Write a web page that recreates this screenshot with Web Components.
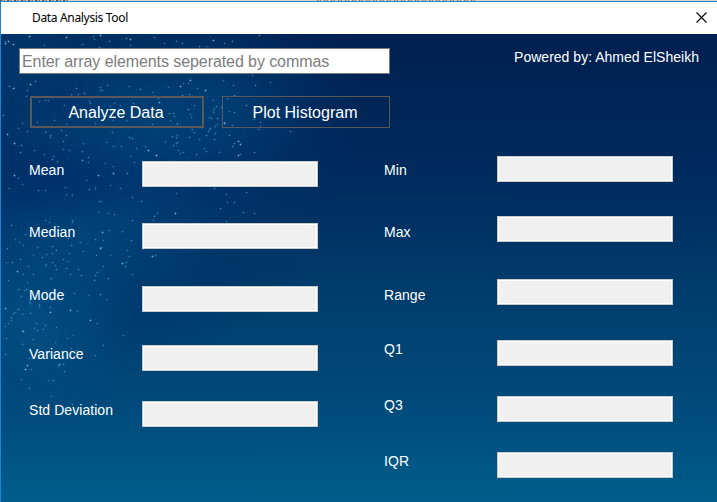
<!DOCTYPE html>
<html lang="en">
<head>
<meta charset="utf-8">
<title>Data Analysis Tool</title>
<style>
html,body{margin:0;width:717px;height:502px;overflow:hidden;font-family:"Liberation Sans",Arial,sans-serif}
</style>
</head>
<body>
<tool-window></tool-window>
<script>
const define = (name, html, setup) => customElements.define(name, class extends HTMLElement {
  connectedCallback() {
    if (this.shadowRoot) return;
    this.attachShadow({ mode: "open" }).innerHTML = html;
    if (setup) setup(this, this.shadowRoot);
  }
});

define("title-bar", `
<style>
:host{display:flex;height:32px;box-sizing:border-box;background:#fff;color:#000;padding:0 10px 0 31px;justify-content:space-between;align-items:center}
span{font:12px/16px "Noto Sans","Open Sans",sans-serif;letter-spacing:-.33px;white-space:nowrap}
svg{display:block;margin-top:-1px}
</style>
<span><slot></slot></span>
<svg width="11" height="11" viewBox="0 0 11 11"><path d="M.5.5l10 10M10.5.5l-10 10" stroke="#000" stroke-width="1.1" fill="none"/></svg>`);

define("starry-sky", `
<style>:host{display:block}svg{display:block}</style>
<svg width="716" height="468" viewBox="1 34 716 468">
<defs>
<linearGradient id="base" x1="0" y1="0" x2="0" y2="1">
<stop offset="0" stop-color="#002050"/><stop offset=".3" stop-color="#002b5e"/><stop offset=".6" stop-color="#00406f"/><stop offset=".8" stop-color="#004b7b"/><stop offset="1" stop-color="#005d8b"/></linearGradient>
<radialGradient id="glow"><stop offset="0" stop-color="#00568a" stop-opacity=".75"/><stop offset=".5" stop-color="#004c86" stop-opacity=".45"/><stop offset="1" stop-color="#004484" stop-opacity="0"/></radialGradient>
<radialGradient id="dark"><stop offset="0" stop-color="#002c68" stop-opacity=".8"/><stop offset="1" stop-color="#002c68" stop-opacity="0"/></radialGradient>
</defs>
<rect x="1" y="34" width="716" height="468" fill="url(#base)"/>
<g fill="url(#glow)">
<ellipse cx="100" cy="100" rx="270" ry="170" opacity=".6"/>
<ellipse cx="20" cy="55" rx="70" ry="60" opacity=".3"/>
<ellipse cx="150" cy="125" rx="150" ry="70" opacity=".35"/>
<ellipse cx="225" cy="100" rx="110" ry="75" opacity=".35"/>
<ellipse cx="90" cy="235" rx="180" ry="100" opacity=".55" transform="rotate(-18 90 235)"/>
<ellipse cx="30" cy="320" rx="120" ry="120" opacity=".75"/>
<ellipse cx="45" cy="345" rx="60" ry="55" opacity=".3"/>
</g>
<g fill="url(#dark)">
<ellipse cx="70" cy="100" rx="60" ry="32" opacity=".6"/>
<ellipse cx="60" cy="178" rx="100" ry="45" opacity=".8"/>
<ellipse cx="190" cy="190" rx="110" ry="38" opacity=".4"/>
<ellipse cx="205" cy="285" rx="130" ry="55" opacity=".4" transform="rotate(-32 205 285)"/>
<ellipse cx="135" cy="315" rx="50" ry="60" opacity=".25"/>
</g>
<g id="stars"></g>
</svg>`, (host, root) => {
  let seed = 4217;
  const rnd = () => (seed = (seed * 16807) % 2147483647) / 2147483647;
  const clusters = [
    [130, 45, 130, 22, 90], [90, 105, 110, 50, 180], [215, 112, 65, 42, 130],
    [125, 140, 100, 25, 90], [80, 190, 85, 35, 90], [190, 200, 70, 25, 25],
    [75, 245, 80, 32, 120], [35, 310, 48, 60, 110], [65, 325, 65, 48, 60], [40, 370, 45, 30, 25]
  ];
  let out = "";
  for (const [cx, cy, rx, ry, n] of clusters) {
    for (let i = 0; i < n; i++) {
      const x = Math.round(cx + (rnd() + rnd() - 1) * rx * 1.3);
      const y = Math.round(cy + (rnd() + rnd() - 1) * ry * 1.3);
      const b = Math.pow(rnd(), 2.8);
      if (x < 2 || y < 35 || x > 310) continue;
      out += `<rect x="${x}" y="${y}" width="1" height="1" fill="#55a9d0" opacity="${(.12 + b * .5).toFixed(2)}"/>`;
      if (b > .2) out += `<path d="M${x - 1} ${y}h3v1h-3zM${x} ${y - 1}h1v3h-1z" fill="#3796c1" opacity=".25"/>`;
    }
  }
  const bright = [[130,39],[13,44],[5,43],[8,41],[213,40],[100,35],[66,37],[29,36],[190,80],[180,86],[205,90],[154,96],[159,102],[30,84],[13,88],[7,134],[156,155],[148,150],[14,175],[113,173],[98,175],[175,213],[102,232],[100,248],[152,256],[122,263],[17,271],[50,312],[70,310],[23,331],[27,365],[25,369],[59,364],[63,357],[5,308],[90,320],[238,141],[240,144],[14,143],[224,123],[238,155]];
  for (const [x, y] of bright)
    out += `<path d="M${x - 1} ${y}h3v1h-3zM${x} ${y - 1}h1v3h-1z" fill="#4bb0d2" opacity=".4"/><rect x="${x}" y="${y}" width="1" height="1" fill="#70c4e0" opacity=".75"/>`;
  root.getElementById("stars").innerHTML = out;
});

define("array-input", `
<style>
:host{display:block;box-sizing:border-box;width:371px;height:26px;border:1px solid #7a7a7a;background:#fff;color:#7d7d7d;padding-left:2px;font-size:16px;line-height:25px;white-space:nowrap}
span{letter-spacing:-.08px}
</style><span><slot></slot></span>`);

define("outline-button", `
<style>
:host{display:flex;box-sizing:border-box;height:32px;border:1px solid #5a5858;align-items:center;justify-content:center;color:#fff;font-size:16px;line-height:18px;white-space:nowrap;padding:2px 2px 0 0}
:host([primary]){border-width:2px}
</style><span><slot></slot></span>`);

define("stat-row", `
<style>
:host{display:grid;grid-template-columns:113px 176px;align-items:start;color:#fff;font-size:14px;line-height:16px}
label{padding-top:var(--drop,1px);white-space:nowrap;letter-spacing:.06px}
div{box-sizing:border-box;height:26px;background:#f0f0f0;border:1px solid #c8c8c8;box-shadow:inset 0 0 0 1px #fff}
</style><label><slot></slot></label><div></div>`);

define("tool-window", `
<style>
:host{display:grid;grid-template-rows:1px 1px 32px 468px;width:717px;height:502px;background:#1883d7}
.behind{background:repeating-linear-gradient(90deg,#555 0 2px,#b8aaa0 2px 4px,#777 4px 5px,#d5d2cf 5px 7px) 0 0/68px 1px no-repeat,repeating-linear-gradient(90deg,#777 0 1px,#c5bcb4 1px 3px,#888 3px 4px,#d5d2cf 4px 7px) 317px 0/161px 1px no-repeat,#d6d4d2}
.edge{background:#2683c6}
title-bar,.client{margin-left:1px}
.client{display:grid;grid-template:468px/716px;color:#fff}
.client>*{grid-area:1/1}
.content{display:grid;grid-template:40px 54px 1fr/716px}
.top{display:flex;justify-content:space-between;align-items:flex-start;padding:14px 18px 0 18px}
.credit{font-size:14px;line-height:16px;padding-top:1px;white-space:nowrap;letter-spacing:.02px}
.actions{display:flex;gap:18px;padding:22px 0 0 29px}
.actions :first-child{width:174px}.actions :last-child{width:168px}
.stats{display:grid;grid-template-columns:355px 1fr;padding:28px 0 0 28px}
.left{display:grid;grid-template-rows:62px 63px 59px 56px 26px;padding-top:5px;align-content:start}
.right{display:grid;grid-template-rows:60px 63px 61px 56px 56px 26px;align-content:start}
</style>
<div class="behind"></div><div class="edge"></div>
<title-bar>Data Analysis Tool</title-bar>
<div class="client">
<starry-sky></starry-sky>
<div class="content">
<div class="top"><array-input>Enter array elements seperated by commas</array-input><div class="credit">Powered by: Ahmed ElSheikh</div></div>
<div class="actions"><outline-button primary>Analyze Data</outline-button><outline-button>Plot Histogram</outline-button></div>
<div class="stats">
<div class="left"><stat-row>Mean</stat-row><stat-row>Median</stat-row><stat-row>Mode</stat-row><stat-row>Variance</stat-row><stat-row>Std Deviation</stat-row></div>
<div class="right"><stat-row style="--drop:6px">Min</stat-row><stat-row style="--drop:8px">Max</stat-row><stat-row style="--drop:8px">Range</stat-row><stat-row>Q1</stat-row><stat-row>Q3</stat-row><stat-row>IQR</stat-row></div>
</div>
</div>
</div>`);
</script>
</body>
</html>
